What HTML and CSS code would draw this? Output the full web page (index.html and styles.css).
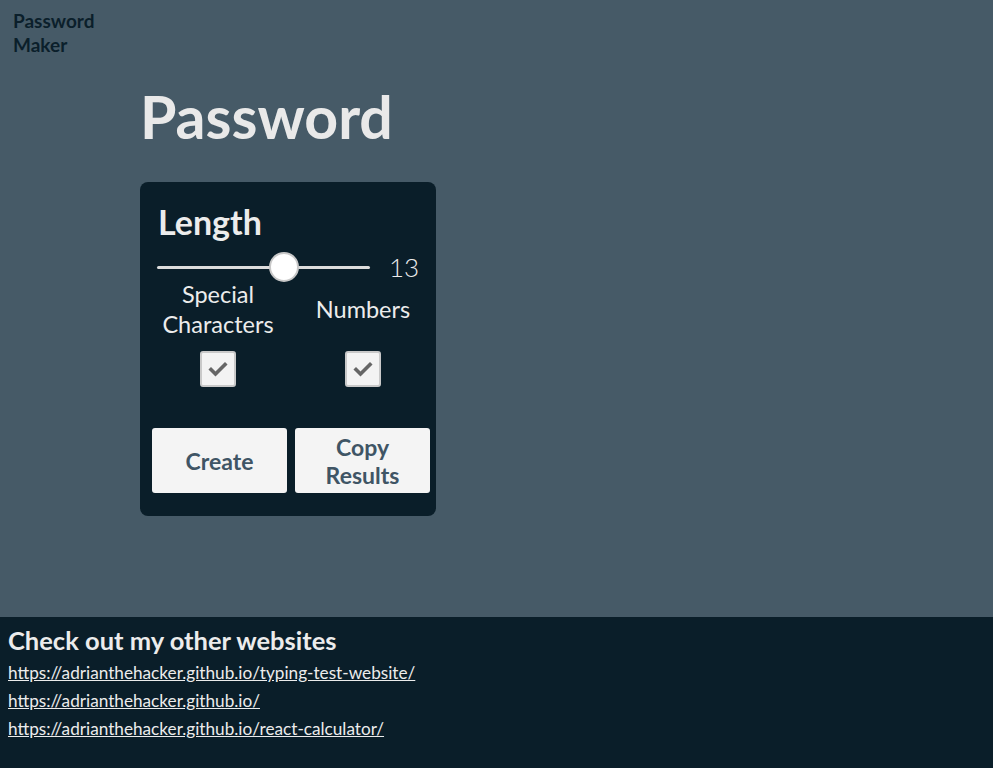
FILE: index.html
```html
<!DOCTYPE html>
<html lang="en">
<head>
<meta charset="utf-8">
<title>Password Maker</title>
<link rel="stylesheet" href="styles.css">
</head>
<body>
<div class="page">
  <header class="top">
    <div class="brand">Password Maker</div>
  </header>
  <main class="main">
    <h1 class="title">Password</h1>
    <section class="card">
      <h2 class="card-title">Length</h2>
      <div class="slider-row">
        <div class="slider">
          <div class="track"></div>
          <div class="thumb"></div>
        </div>
        <span class="value">13</span>
      </div>
      <div class="options">
        <div class="option">
          <div class="opt-label">Special<br>Characters</div>
          <div class="checkbox">
            <svg viewBox="0 0 24 24" width="24" height="24"><path d="M5 12.5 L9.5 17 L19 7.5" fill="none" stroke="#666" stroke-width="3.6" stroke-linecap="square"/></svg>
          </div>
        </div>
        <div class="option option-wide">
          <div class="opt-label">Numbers</div>
          <div class="checkbox">
            <svg viewBox="0 0 24 24" width="24" height="24"><path d="M5 12.5 L9.5 17 L19 7.5" fill="none" stroke="#666" stroke-width="3.6" stroke-linecap="square"/></svg>
          </div>
        </div>
      </div>
      <div class="buttons">
        <button class="btn">Create</button>
        <button class="btn">Copy<br>Results</button>
      </div>
    </section>
  </main>
  <footer class="footer">
    <h3 class="footer-title">Check out my other websites</h3>
    <a class="link" href="#">https://adrianthehacker.github.io/typing-test-website/</a>
    <a class="link" href="#">https://adrianthehacker.github.io/</a>
    <a class="link" href="#">https://adrianthehacker.github.io/react-calculator/</a>
  </footer>
</div>
</body>
</html>
```
FILE: styles.css
```css
* { box-sizing: border-box; }
html, body { margin: 0; padding: 0; }
body {
  font-family: Lato, "Noto Sans", sans-serif;
  background: #465a67;
  color: #ececec;
}
.page {
  min-height: 768px;
  display: flex;
  flex-direction: column;
}
.top {
  padding: 9px 13px 0;
}
.brand {
  width: 90px;
  font-size: 19px;
  font-weight: 700;
  line-height: 24px;
  color: #0b1f2b;
}
.main {
  flex: 1;
  padding-left: 140px;
}
.title {
  margin: 25px 0 0;
  font-size: 59px;
  line-height: 70px;
  font-weight: 700;
  color: #e9e9e9;
}
.card {
  margin-top: 30px;
  width: 296px;
  height: 334px;
  background: #0a1e29;
  border-radius: 8px;
  padding: 20px 5px 0 12px;
}
.card-title {
  margin: 0 0 0 6px;
  font-size: 34px;
  line-height: 40px;
  font-weight: 700;
  color: #ececec;
}
.slider-row {
  display: flex;
  align-items: center;
  height: 32px;
  margin-top: 9px;
  padding-left: 5px;
}
.slider {
  position: relative;
  width: 213px;
  height: 32px;
  display: flex;
  align-items: center;
}
.track {
  width: 100%;
  height: 3px;
  background: #dcdcdc;
  border-radius: 2px;
}
.thumb {
  position: absolute;
  left: 112px;
  top: 1px;
  width: 30px;
  height: 30px;
  border-radius: 50%;
  background: #fff;
  border: 2px solid #c8c8c8;
}
.value {
  margin-left: 19px;
  font-size: 26px;
  font-weight: 300;
  color: #ececec;
}
.options {
  display: flex;
  margin-top: -4px;
}
.option {
  flex: 0 0 132px;
  display: flex;
  flex-direction: column;
  align-items: center;
}
.option-wide {
  flex: 0 0 158px;
}
.opt-label {
  height: 60px;
  display: flex;
  align-items: center;
  text-align: center;
  font-size: 23.5px;
  line-height: 30px;
  color: #ececec;
  white-space: nowrap;
}
.checkbox {
  margin-top: 12px;
  width: 36px;
  height: 36px;
  background: #f3f3f3;
  border: 2px solid #c9c9c9;
  border-radius: 3px;
  display: flex;
  align-items: center;
  justify-content: center;
}
.buttons {
  display: flex;
  gap: 8px;
  margin-top: 41px;
}
.btn {
  flex: 0 0 135px;
  height: 65px;
  border: none;
  border-radius: 3px;
  background: #f4f4f4;
  font-family: Lato, "Noto Sans", sans-serif;
  font-size: 23px;
  line-height: 28px;
  font-weight: 700;
  color: #3f5565;
  padding: 0;
}
.footer {
  height: 151px;
  background: #0a1e29;
  padding: 7px 8px 0;
  display: flex;
  flex-direction: column;
  align-items: flex-start;
}
.footer-title {
  margin: 0 0 2px;
  font-size: 25.5px;
  line-height: 33px;
  font-weight: 700;
  color: #ececec;
}
.link {
  font-size: 17.2px;
  line-height: 28px;
  color: #ececec;
}
```
